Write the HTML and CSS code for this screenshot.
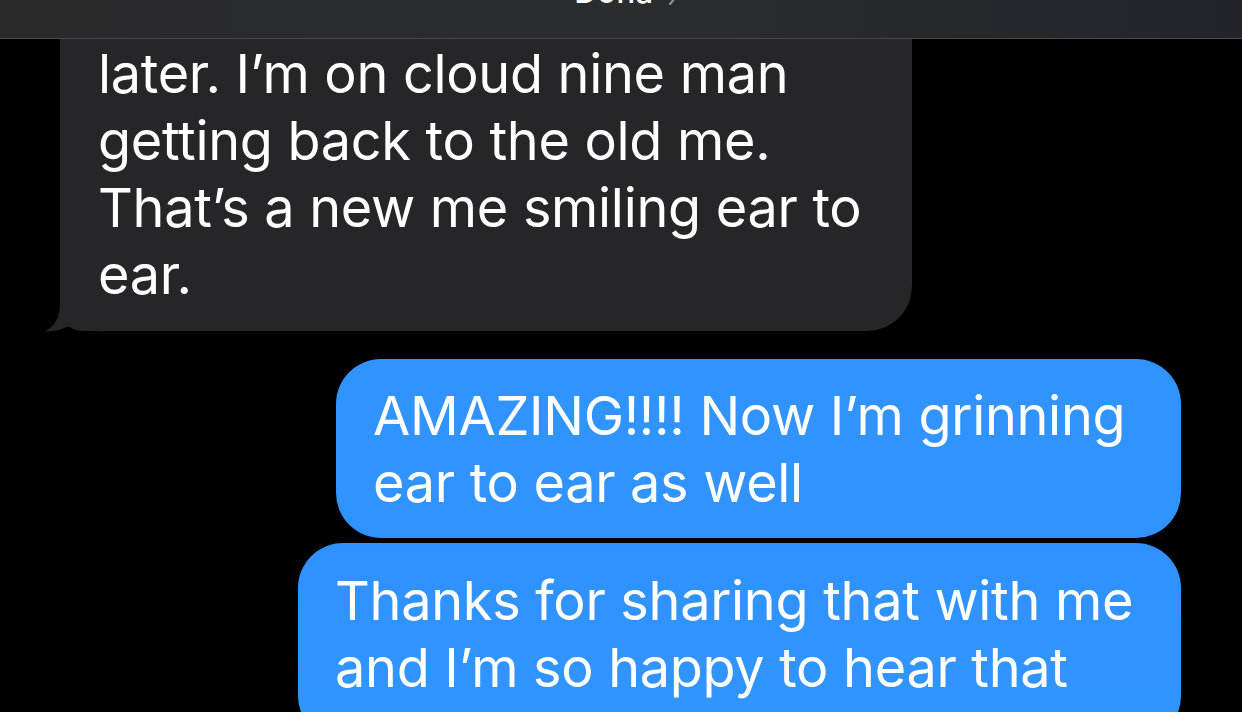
FILE: index.html
```html
<!DOCTYPE html>
<html>
<head>
<meta charset="utf-8">
<link rel="stylesheet" href="styles.css">
</head>
<body>
<div class="screen">
  <header class="topbar">
    <div class="title">
      <span class="name">Dona</span>
      <svg class="chev" width="10" height="14" viewBox="0 0 10 14"><path d="M2 1 L7 7 L2 13" fill="none" stroke="#8e8e93" stroke-width="2.2" stroke-linecap="round" stroke-linejoin="round"/></svg>
    </div>
  </header>
  <main class="thread">
    <div class="bubble in">
      <div class="lines">later. I’m on cloud nine man<br>getting back to the old me.<br>That’s a new me smiling ear to<br>ear.</div>
      <svg class="tail" width="60" height="37" viewBox="0 0 60 37"><path d="M16 0 L16 10 C16 24 9 33 0 36.5 C13 37 26 32 35 25 C42 32 50 36.5 60 36.5 L60 0 Z" fill="#262629"/></svg>
    </div>
    <div class="bubble out first">
      <div class="lines">AMAZING!!!! Now I’m grinning<br>ear to ear as well</div>
    </div>
    <div class="bubble out second">
      <div class="lines">Thanks for sharing that with me<br>and I’m so happy to hear that</div>
    </div>
  </main>
</div>
</body>
</html>
```
FILE: styles.css
```css
* { box-sizing: border-box; }
html, body { margin: 0; padding: 0; background: #000; }
body {
  width: 1242px;
  height: 712px;
  overflow: hidden;
  font-family: Inter, "Open Sans", "Liberation Sans", sans-serif;
  color: #fff;
}
.screen { display: flex; flex-direction: column; height: 712px; }
.topbar {
  height: 39px;
  flex: none;
  background: linear-gradient(90deg, #2a2a2b 0%, #2b2c2e 55%, #22242a 100%);
  border-bottom: 1px solid #4a4a4d;
  overflow: hidden;
  display: flex;
  justify-content: center;
  align-items: flex-start;
  position: relative;
  z-index: 2;
}
.title {
  display: flex;
  align-items: flex-end;
  gap: 14px;
  margin-top: -23px;
  padding-left: 10px;
}
.name {
  font-size: 31px;
  line-height: 30px;
  font-weight: 500;
  letter-spacing: 0.5px;
}
.chev { margin-bottom: 2px; }
.thread {
  display: flex;
  flex-direction: column;
  align-items: flex-start;
  padding: 0 61px 0 60px;
}
.bubble {
  position: relative;
  font-size: 54px;
  line-height: 67px;
  letter-spacing: -0.3px;
  white-space: nowrap;
  border-radius: 45px;
}
.lines { position: relative; z-index: 1; }
.in {
  width: 852px;
  background: #262629;
  padding: 1px 38px 23px 38px;
  border-radius: 0 0 45px 22px;
}
.tail { position: absolute; left: -16px; bottom: -1px; }
.out {
  align-self: flex-end;
  background: #3093fe;
  padding: 23px 40px 22px 37px;
}
.first { width: 845px; margin-top: 28px; }
.second {
  width: 883px;
  margin-top: 5px;
  padding-top: 24px;
  padding-bottom: 40px;
  background: linear-gradient(180deg, #2f91fe 0%, #3296ff 100%);
}
```
